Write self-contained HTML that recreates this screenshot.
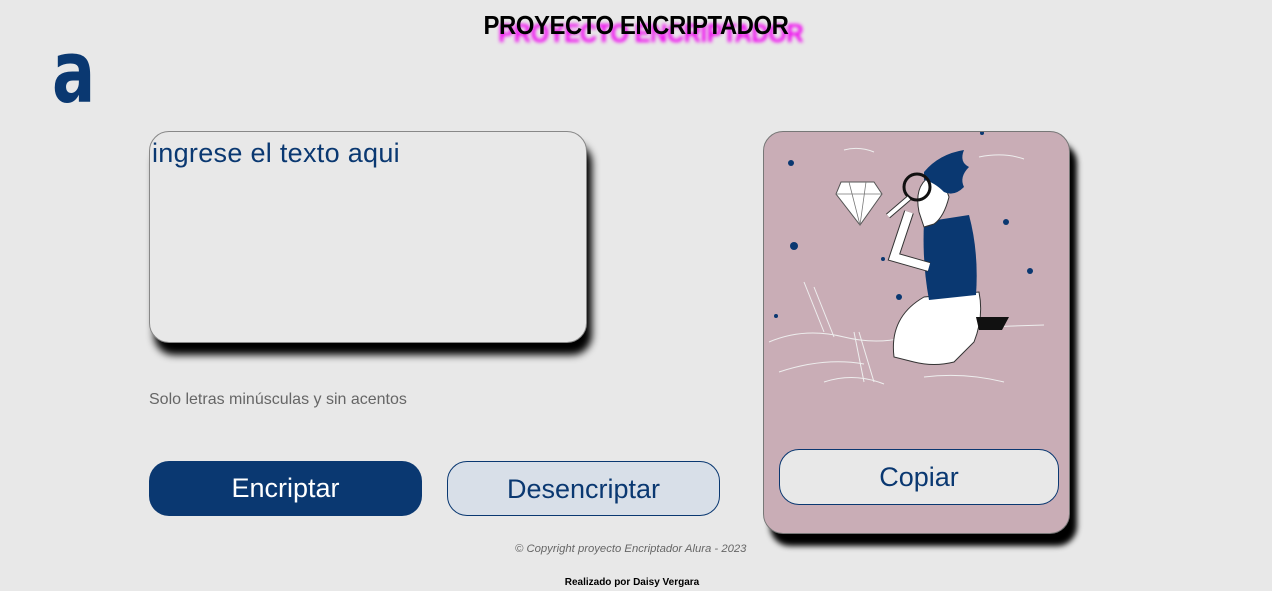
<!DOCTYPE html>
<html><head><meta charset="utf-8"><style>
body{margin:0;width:1272px;height:591px;background:#e8e8e8;position:relative;overflow:hidden;font-family:"Liberation Sans",sans-serif}
.t{position:absolute;left:0;width:1272px;top:10px;text-align:center;font-weight:bold;font-size:26px;letter-spacing:-0.5px;color:#000;text-shadow:16px 8px 4px #f000f0;transform:scaleX(0.92)}
.logo{position:absolute;left:52px;top:51px;font-size:64px;color:#0a3871;font-weight:bold;line-height:70px;font-family:"DejaVu Sans",sans-serif;transform:scaleY(1.35);transform-origin:0 100%}
.ta{position:absolute;left:149px;top:131px;width:436px;height:210px;border:1px solid #888;border-radius:20px;background:#e8e8e8;box-shadow:5px 12px 8px #000}
.ta span{position:absolute;left:2px;top:6px;font-size:27px;color:#0a3871;font-weight:300;letter-spacing:0.3px}
.hint{position:absolute;left:149px;top:391px;font-size:16px;color:#666}
.b{position:absolute;top:461px;height:55px;width:273px;border-radius:20px;font-size:27px;text-align:center;line-height:55px;box-sizing:border-box;font-weight:300}
.card{position:absolute;left:763px;top:131px;width:307px;height:403px;border:1px solid #777;border-radius:20px;background:#c9adb6;box-shadow:7px 12px 6px #000;box-sizing:border-box;overflow:hidden}
.copy{position:absolute;left:15px;top:317px;width:280px;height:56px;border:1px solid #0a3871;border-radius:20px;background:#e8e8e8;color:#0a3871;font-size:27px;text-align:center;line-height:54px;box-sizing:border-box}
.foot{position:absolute;left:515px;top:543px;font-size:11.3px;font-style:italic;color:#666}
.by{position:absolute;left:0;width:1264px;top:577px;text-align:center;font-size:10px;font-weight:bold}
</style></head><body>
<div class="t">PROYECTO ENCRIPTADOR</div>
<div class="logo">a</div>
<div class="ta"><span>ingrese el texto aqui</span></div>
<div class="hint">Solo letras minúsculas y sin acentos</div>
<div class="b" style="left:149px;background:#0a3871;color:#fff">Encriptar</div>
<div class="b" style="left:447px;background:#d8dfe8;border:1px solid #0a3871;color:#0a3871">Desencriptar</div>
<div class="card">
<svg width="307" height="300" viewBox="0 0 307 300" style="position:absolute;left:0;top:0">
<g fill="#0a3871"><circle cx="27" cy="31" r="3"/><circle cx="30" cy="114" r="4"/><circle cx="218" cy="1" r="2"/><circle cx="242" cy="90" r="3"/><circle cx="266" cy="139" r="3"/><circle cx="135" cy="165" r="3"/><circle cx="119" cy="127" r="2"/><circle cx="12" cy="184" r="2"/></g>
<g stroke="#eee" fill="none" stroke-width="1"><path d="M5 210 Q40 195 80 205 T160 200"/><path d="M15 240 Q60 225 100 232"/><path d="M60 250 Q90 240 120 252"/><path d="M160 245 Q200 240 240 250"/><path d="M220 195 L280 193"/><path d="M40 150 L60 200 M50 155 L70 205"/><path d="M90 200 L100 250 M95 200 L110 250"/><path d="M215 25 Q240 20 260 27"/><path d="M80 18 Q95 14 110 20"/></g>
<path d="M77 50 L110 50 L118 62 L96 93 L72 62Z" fill="#fff" stroke="#555"/>
<path d="M72 62 L118 62 M85 50 L96 93 L102 50" fill="none" stroke="#777" stroke-width="0.8"/>
<path d="M130 225 Q125 185 160 165 L215 160 Q220 185 210 210 L190 230 Q170 235 150 230Z" fill="#fff" stroke="#333"/>
<path d="M212 185 L245 185 L238 198 L215 198Z" fill="#111"/>
<path d="M160 90 L205 83 Q215 120 212 163 L165 168 Q158 130 160 90Z" fill="#0a3871"/>
<path d="M155 80 Q150 55 165 45 Q180 48 185 65 Q180 85 170 92 L160 95 Z" fill="#fff" stroke="#333"/>
<path d="M160 40 Q175 22 200 18 Q195 30 205 35 Q195 45 200 55 Q190 65 180 60 Q170 50 160 48Z" fill="#0a3871"/>
<path d="M145 80 L130 125 L165 135" fill="none" stroke="#333" stroke-width="10"/><path d="M145 80 L130 125 L165 135" fill="none" stroke="#fff" stroke-width="8"/>
<circle cx="153" cy="55" r="13" fill="none" stroke="#111" stroke-width="3"/>
<path d="M145 66 L124 84" stroke="#333" stroke-width="6"/><path d="M145 66 L124 84" stroke="#fff" stroke-width="4"/>
</svg>
<div class="copy">Copiar</div>
</div>
<div class="foot">© Copyright proyecto Encriptador Alura - 2023</div>
<div class="by">Realizado por Daisy Vergara</div>
</body></html>
